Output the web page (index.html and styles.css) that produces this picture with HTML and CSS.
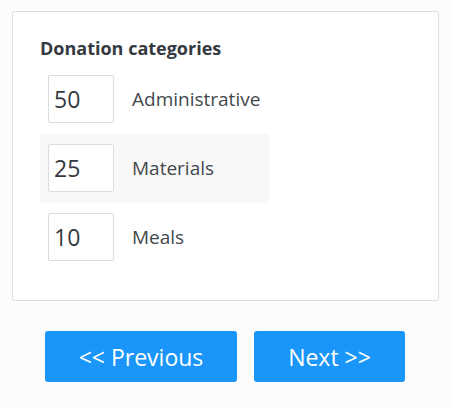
FILE: index.html
```html
<!DOCTYPE html>
<html lang="en">
    <head>
        <title>donation</title>
        <meta charset="utf-8" />
        <meta name="viewport" content="width=device-width, initial-scale=1.0" />
        <link rel="stylesheet" href="styles.css">
    </head>
    <body>
        <div id="card">
            <h3>Donation categories</h3>
            <div class="row">
                <input class="amount" type="text" value="50" />
                <span class="name">Administrative</span>
            </div>
            <div class="row hover">
                <input class="amount" type="text" value="25" />
                <span class="name">Materials</span>
            </div>
            <div class="row">
                <input class="amount" type="text" value="10" />
                <span class="name">Meals</span>
            </div>
        </div>
        <div id="nav">
            <button id="previous" type="button">&lt;&lt; Previous</button>
            <button id="next" type="button">Next &gt;&gt;</button>
        </div>
    </body>
</html>
```
FILE: styles.css
```css
html, body {
    margin: 0px;
    padding: 0px;
    background: #fcfcfc;
    font-family: "Open Sans", sans-serif;
    color: #3a3f44;
}
#card {
    margin: 11px 0px 0px 12px;
    border: 1px solid #dedede;
    border-radius: 2px;
    padding: 24px 27px 28px;
    width: 371px;
    background: white;
}
#card h3 {
    margin: 0px 0px 5px;
    line-height: 24px;
    font-size: 18px;
    font-weight: bold;
    color: #343a40;
}
.row {
    display: flex;
    align-items: center;
    gap: 18px;
    padding: 10px 8px 11px;
    width: 213px;
}
.hover {
    background: #f8f8f8;
}
.amount {
    box-sizing: border-box;
    margin: 0px;
    border: 1px solid #dcdcdc;
    border-radius: 2px;
    padding: 0px 5px;
    width: 66px;
    height: 48px;
    background: white;
    color: #343a40;
    font-family: "Open Sans", sans-serif;
    font-size: 23px;
    outline: 0;
}
.name {
    font-size: 19px;
    color: #43484d;
}
#nav {
    display: flex;
    justify-content: center;
    gap: 17px;
    margin-top: 30px;
    padding-right: 3px;
}
#nav button {
    border: none;
    border-radius: 3px;
    padding: 0px;
    height: 51px;
    background: #1a96fb;
    color: white;
    font-family: "Open Sans", sans-serif;
    font-size: 23px;
    cursor: pointer;
}
#previous {
    width: 192px;
}
#next {
    width: 151px;
}
```
